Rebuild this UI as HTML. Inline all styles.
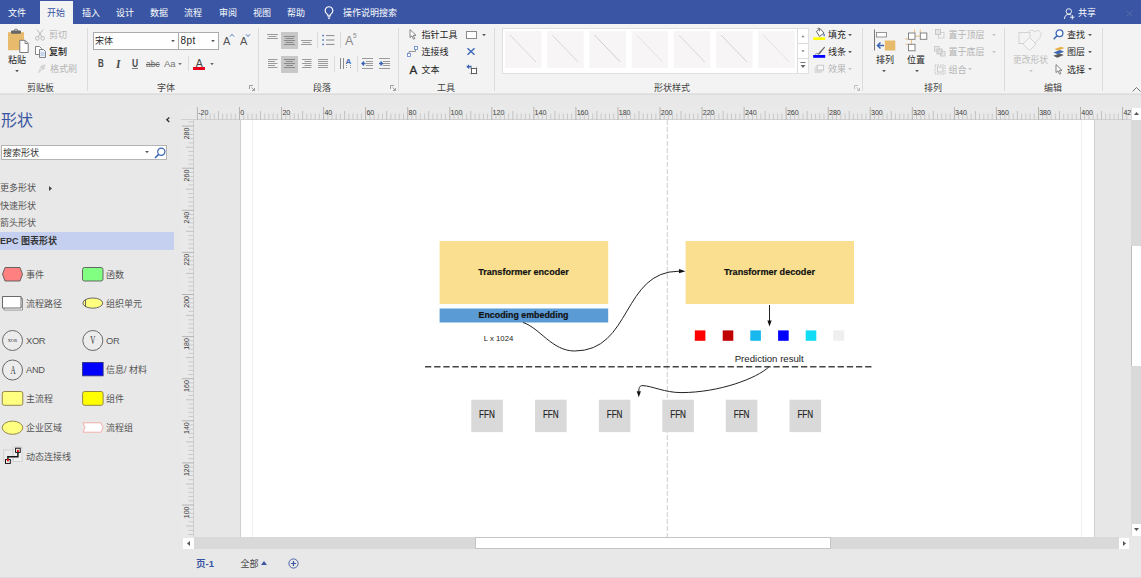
<!DOCTYPE html>
<html lang="zh-CN">
<head>
<meta charset="utf-8">
<title>Visio</title>
<style>
*{box-sizing:border-box;margin:0;padding:0}
html,body{width:1141px;height:578px;overflow:hidden;background:#e6e6e6}
body{position:relative;font-family:"Liberation Sans","Noto Sans CJK SC",sans-serif;font-size:9px;color:#262626;line-height:1}
.a{position:absolute;white-space:nowrap}
.t{position:absolute;white-space:nowrap;line-height:12px;height:12px;font-size:9px}
.g{color:#b4b4b4}
#tabs{left:0;top:0;width:1141px;height:24px;background:#3955a3}
#tabs .t{color:#fff;font-size:9px;top:6.5px}
#ribbon{left:0;top:24px;width:1141px;height:70px;background:#f3f3f3}
.sep{position:absolute;top:28px;width:1px;height:63px;background:#dcdcdc}
.gl{position:absolute;top:81.5px;font-size:9px;line-height:12px;color:#444}
svg{position:absolute;overflow:visible}
</style>
</head>
<body>
<!-- TAB BAR -->
<div id="tabs" class="a">
  <div class="a" style="left:40px;top:1px;width:33px;height:23px;background:#f3f3f3"></div>
  <div class="t" style="left:8px">文件</div>
  <div class="t" style="left:47px;color:#3955a3">开始</div>
  <div class="t" style="left:82px">插入</div>
  <div class="t" style="left:116px">设计</div>
  <div class="t" style="left:150px">数据</div>
  <div class="t" style="left:184px">流程</div>
  <div class="t" style="left:219px">审阅</div>
  <div class="t" style="left:253px">视图</div>
  <div class="t" style="left:287px">帮助</div>
  <div class="t" style="left:343px">操作说明搜索</div>
  <div class="t" style="left:1078px;top:7px">共享</div>
</div>
<!-- RIBBON -->
<div id="ribbon" class="a"></div>
<svg style="left:0;top:92px" width="1141" height="4"><path d="M0 2h1141" stroke="#d4d4d4" stroke-width="1.2"/></svg>
<div class="sep" style="left:87px"></div>
<div class="sep" style="left:258px"></div>
<div class="sep" style="left:398px"></div>
<div class="sep" style="left:494px"></div>
<div class="sep" style="left:862px"></div>
<div class="sep" style="left:1004px"></div>
<div class="sep" style="left:1102px"></div>
<div class="gl" style="left:27px">剪贴板</div>
<div class="gl" style="left:157px">字体</div>
<div class="gl" style="left:313px">段落</div>
<div class="gl" style="left:437px">工具</div>
<div class="gl" style="left:654px">形状样式</div>
<div class="gl" style="left:924px">排列</div>
<div class="gl" style="left:1044px">编辑</div>
<!-- clipboard group -->
<svg style="left:7px;top:29px" width="24" height="26" viewBox="0 0 24 26">
  <rect x="1" y="3.2" width="16" height="18" fill="#e8bb6c"/>
  <rect x="4" y="1.5" width="10" height="3.2" rx="0.8" fill="#666"/>
  <rect x="7.5" y="0.3" width="3" height="2.5" rx="1" fill="none" stroke="#666" stroke-width="1"/>
  <path d="M12.8 11.3h5.2l3.2 3.2v9h-8.4z" fill="#fff" stroke="#7a7a7a" stroke-width="1"/>
  <path d="M18 11.3v3.2h3.2" fill="none" stroke="#7a7a7a" stroke-width="0.9"/>
</svg>
<div class="t" style="left:8px;top:53.5px;font-size:9px">粘贴</div>
<svg style="left:15px;top:70px" width="4" height="3"><path d="M0.2 0h3.6l-1.8 2.2z" fill="#555"/></svg>
<!-- cut -->
<svg style="left:35px;top:29px" width="10" height="12" viewBox="0 0 10 12">
  <path d="M2 0.5L7 8M8 0.5L3 8" stroke="#bdbdbd" stroke-width="1" fill="none"/>
  <circle cx="2.3" cy="9.3" r="1.8" fill="none" stroke="#bdbdbd" stroke-width="1"/>
  <circle cx="7.7" cy="9.3" r="1.8" fill="none" stroke="#bdbdbd" stroke-width="1"/>
</svg>
<div class="t g" style="left:49px;top:29px">剪切</div>
<!-- copy -->
<svg style="left:35px;top:46px" width="11" height="12" viewBox="0 0 11 12">
  <path d="M0.5 0.5h4l2 2v6h-6z" fill="#fff" stroke="#777" stroke-width="0.9"/>
  <path d="M4.5 3.5h4l2 2v6h-6z" fill="#e9f1fb" stroke="#777" stroke-width="0.9"/>
  <path d="M5.5 7h4M5.5 9h4" stroke="#8aa9d6" stroke-width="0.8"/>
</svg>
<div class="t" style="left:49px;top:46px;font-weight:500;color:#222">复制</div>
<!-- format painter -->
<svg style="left:37px;top:64px" width="9" height="10" viewBox="0 0 9 10">
  <path d="M5 1l3 3-2 2-3-3z" fill="#cfcfcf"/>
  <path d="M3 4L0.8 8.6l1 0.6L5 6z" fill="#d8d8d8"/>
  <circle cx="7.3" cy="1.6" r="1.1" fill="#c8c8c8"/>
</svg>
<div class="t g" style="left:50px;top:63px">格式刷</div>
<!-- font group -->
<div class="a" style="left:93px;top:32px;width:86px;height:18px;background:#fff;border:1px solid #ababab"></div>
<div class="a" style="left:178px;top:32px;width:41px;height:18px;background:#fff;border:1px solid #ababab"></div>
<div class="t" style="left:95px;top:35px;font-size:9px">宋体</div>
<div class="t" style="left:180.5px;top:35px;font-size:10px;letter-spacing:0.5px">8pt</div>
<svg style="left:171px;top:40px" width="4" height="3"><path d="M0.2 0h3.6l-1.8 2.2z" fill="#555"/></svg>
<svg style="left:211px;top:40px" width="4" height="3"><path d="M0.2 0h3.6l-1.8 2.2z" fill="#555"/></svg>
<div class="t" style="left:223px;top:35px;font-size:11px;color:#555">A</div>
<svg style="left:230px;top:34px" width="4" height="3"><path d="M0 2.5L2 0.3 4 2.5" stroke="#4a78c0" stroke-width="1" fill="none"/></svg>
<div class="t" style="left:240px;top:35px;font-size:11px;color:#555">A</div>
<svg style="left:246px;top:34px" width="4" height="3"><path d="M0 0.3L2 2.5 4 0.3" stroke="#4a78c0" stroke-width="1" fill="none"/></svg>
<div class="t" style="left:98px;top:58px;font-size:10px;font-weight:bold;color:#4a4a4a;transform:scaleX(.8);transform-origin:0 0">B</div>
<div class="t" style="left:116px;top:58px;font-size:11.5px;font-weight:bold;font-style:italic;font-family:'Liberation Serif',serif;color:#4a4a4a">I</div>
<div class="t" style="left:131.5px;top:58px;font-size:10px;font-weight:bold;color:#4a4a4a;transform:scaleX(.85);transform-origin:0 0">U</div><div class="a" style="left:131.5px;top:67.7px;width:6.5px;height:1px;background:#777"></div>
<div class="t" style="left:146px;top:58px;font-size:8.5px;color:#666;text-decoration:line-through">abc</div>
<div class="t" style="left:164px;top:58px;font-size:9.5px;color:#777">Aa</div>
<svg style="left:178px;top:63px" width="4" height="3"><path d="M0.2 0h3.6l-1.8 2.2z" fill="#777"/></svg>
<div class="a" style="left:188px;top:56px;width:1px;height:15px;background:#dcdcdc"></div>
<div class="t" style="left:195.7px;top:56.5px;font-size:10.5px;color:#444">A</div>
<div class="a" style="left:193.3px;top:67px;width:12.2px;height:2.5px;background:#e8001c"></div>
<svg style="left:210px;top:63px" width="4" height="3"><path d="M0.2 0h3.6l-1.8 2.2z" fill="#666"/></svg>
<svg style="left:249px;top:85px" width="6" height="6" viewBox="0 0 6 6"><path d="M0.5 4V0.5H4M2.5 2.5L5.3 5.3M5.5 3v2.5H3" stroke="#888" stroke-width="0.8" fill="none"/></svg>
<!-- paragraph group -->
<div class="a" style="left:281px;top:32px;width:17px;height:17px;background:#c8c8c8"></div>
<div class="a" style="left:281px;top:55.5px;width:17px;height:17px;background:#c8c8c8"></div>
<svg style="left:267px;top:32px" width="46" height="17" viewBox="0 0 46 17">
  <g stroke="#9a9a9a" stroke-width="1" fill="none">
    <path d="M0 2.5h11M1.5 4.5h8M0 6.5h11"/>
    <path d="M17 4.5h11M18.5 6.5h8M17 8.5h11M18.5 10.5h8M17 12.5h11" stroke="#8a8a8a"/>
    <path d="M34 8.5h11M35.5 10.5h8M34 12.5h11" />
  </g>
</svg>
<div class="a" style="left:317px;top:32px;width:1px;height:16px;background:#dcdcdc"></div>
<svg style="left:322px;top:34px" width="13" height="12" viewBox="0 0 13 12">
  <g fill="#4a78c0"><rect x="0.3" y="0.8" width="1.6" height="1.6"/><rect x="0.3" y="5.2" width="1.6" height="1.6"/><rect x="0.3" y="9.6" width="1.6" height="1.6"/></g>
  <path d="M4 1.6h8.5M4 6h8.5M4 10.4h8.5" stroke="#8a8a8a" stroke-width="1"/>
</svg>
<div class="a" style="left:339.5px;top:32px;width:1px;height:16px;background:#dcdcdc"></div>
<div class="t" style="left:345px;top:35px;font-size:12.5px;color:#8a8a8a">A</div>
<div class="t" style="left:353px;top:30px;font-size:6.5px;color:#8a8a8a">5</div>
<svg style="left:267px;top:55px" width="125" height="17" viewBox="0 0 125 17">
  <g stroke="#9a9a9a" stroke-width="1" fill="none">
    <path d="M1 4.5h9.5M1 6.5h7M1 8.5h9.5M1 10.5h7M1 12.5h9.5" />
    <path d="M17 4.5h11M19 6.5h7M17 8.5h11M19 10.5h7M17 12.5h11" stroke="#8a8a8a"/>
    <path d="M35 4.5h9.5M37.5 6.5h7M35 8.5h9.5M37.5 10.5h7M35 12.5h9.5"/>
    <path d="M51 4.5h10M51 6.5h10M51 8.5h10M51 10.5h10M51 12.5h10"/>
    <path d="M73.5 3v11M76.5 3v11" stroke="#8a8a8a"/>
    <path d="M79.5 10v4M83.5 10v4" stroke-dasharray="1 1"/>
    <path d="M95 3.5h11M99 6.5h7M99 8.5h7M99 10.5h7M95 13.5h11"/>
    <path d="M112 3.5h11M116 6.5h7M116 8.5h7M116 10.5h7M112 13.5h11"/>
  </g>
  <path d="M98.5 8.5h-3.5M97 6.5l-2 2 2 2" stroke="#3b66b5" stroke-width="1.3" fill="none"/>
  <path d="M112 8.5h3.5M113.5 6.5l2 2-2 2" stroke="#3b66b5" stroke-width="1.3" fill="none"/>
</svg>
<div class="t" style="left:345.5px;top:56px;font-size:8px;font-weight:bold;color:#3b66b5">A</div>
<div class="a" style="left:333.5px;top:56px;width:1px;height:16px;background:#dcdcdc"></div>
<div class="a" style="left:356.5px;top:56px;width:1px;height:16px;background:#dcdcdc"></div>
<svg style="left:390px;top:85px" width="6" height="6" viewBox="0 0 6 6"><path d="M0.5 4V0.5H4M2.5 2.5L5.3 5.3M5.5 3v2.5H3" stroke="#888" stroke-width="0.8" fill="none"/></svg>
<!-- tools group -->
<svg style="left:409px;top:29px" width="9" height="11" viewBox="0 0 9 11">
  <path d="M1 0.6v8l2-1.8 1.5 3.4 1.3-0.6-1.5-3.3h2.7z" fill="#fff" stroke="#666" stroke-width="0.8"/>
</svg>
<div class="t" style="left:421.5px;top:28.5px">指针工具</div>
<div class="a" style="left:465.5px;top:30.5px;width:11.5px;height:8px;background:#fff;border:1px solid #8a8a8a"></div>
<svg style="left:482px;top:34px" width="4" height="3"><path d="M0.2 0h3.6l-1.8 2.2z" fill="#555"/></svg>
<svg style="left:407px;top:46px" width="12" height="11" viewBox="0 0 12 11">
  <path d="M2 8.5V5.5h6.5V2.5" fill="none" stroke="#8a8a8a" stroke-width="0.9" stroke-linejoin="round"/>
  <rect x="0.5" y="7.5" width="3" height="3" fill="#fff" stroke="#5b86c8" stroke-width="0.8"/>
  <rect x="7.5" y="0.5" width="3" height="3" fill="#fff" stroke="#5b86c8" stroke-width="0.8"/>
</svg>
<div class="t" style="left:421.5px;top:46px">连接线</div>
<svg style="left:467px;top:48px" width="8" height="7" viewBox="0 0 8 7"><path d="M0.5 0.3L7.5 6.7M7.5 0.3L0.5 6.7" stroke="#3b66b5" stroke-width="1.4"/></svg>
<div class="t" style="left:409.5px;top:63.5px;font-size:11.5px;color:#2a2a2a;-webkit-text-stroke:0.3px #2a2a2a">A</div>
<div class="t" style="left:421.5px;top:63.5px">文本</div>
<svg style="left:465.5px;top:64px" width="12" height="11" viewBox="0 0 12 11">
  <rect x="5.5" y="4.5" width="5" height="5" fill="#fff" stroke="#555" stroke-width="0.9"/>
  <path d="M5.5 2.5v8M10.5 2.5v8M3.5 4.5h8M3.5 9.5h8" stroke="#555" stroke-width="0.7" fill="none" opacity="0.5"/>
  <path d="M0.3 2.7l2.7-2.4v1.5h2.5v1.8H3v1.5z" fill="#3b66b5"/>
</svg>
<!-- shape styles gallery -->
<div class="a" style="left:502px;top:28px;width:307px;height:45.5px;background:#fff;border:1px solid #e0e0e0"></div>
<div class="a" style="left:796.5px;top:28px;width:1px;height:45px;background:#dcdcdc"></div>
<div class="a" style="left:797px;top:43px;width:11.5px;height:1px;background:#dcdcdc"></div>
<div class="a" style="left:797px;top:58px;width:11.5px;height:1px;background:#dcdcdc"></div>
<svg style="left:801px;top:35px" width="4" height="3"><path d="M0.5 2.2h3L2 0.2z" fill="#777"/></svg>
<svg style="left:801px;top:50px" width="4" height="3"><path d="M0.5 0.2h3L2 2.2z" fill="#777"/></svg>
<svg style="left:800px;top:62px" width="6" height="7" viewBox="0 0 6 7"><path d="M0.5 0.5h5" stroke="#666" stroke-width="0.9"/><path d="M0.5 3h5l-2.5 3z" fill="#666"/></svg>
<svg style="left:505px;top:31px" width="292" height="38" viewBox="0 0 292 38">
  <g fill="#f7f5f5">
    <rect x="0" y="0" width="36.5" height="37"/><rect x="42.2" y="0" width="36.5" height="37"/><rect x="84.4" y="0" width="36.5" height="37"/>
    <rect x="126.6" y="0" width="36.5" height="37"/><rect x="168.8" y="0" width="36.5" height="37"/><rect x="211" y="0" width="36.5" height="37"/><rect x="253.2" y="0" width="36.5" height="37"/>
  </g>
  <g stroke-width="0.9" fill="none">
    <path d="M5 4l26 27" stroke="#d6d2d2"/>
    <path d="M47.2 4l26 27" stroke="#d8d4d4"/>
    <path d="M89.4 4l26 27" stroke="#cfcaca"/>
    <path d="M131.6 4l26 27" stroke="#e2dede"/>
    <path d="M173.8 4l26 27" stroke="#d8d4d4"/>
    <path d="M216 4l26 27" stroke="#d2cdcd"/>
    <path d="M258.2 4l26 27" stroke="#e4e0e0"/>
  </g>
</svg>
<!-- fill / line / effects -->
<svg style="left:813px;top:28px" width="13" height="12" viewBox="0 0 13 12">
  <path d="M3.5 3.5l3.5-3 4 4.5-4.5 3.5z" fill="#fff" stroke="#555" stroke-width="0.9" stroke-linejoin="round"/>
  <path d="M4.5 0.8c0-1 2-1 2 0.5v2" fill="none" stroke="#555" stroke-width="0.8"/>
  <path d="M10.8 5c1 1.5 1.5 2.5 0.7 3.2-0.8 0.5-1.5-0.5-0.7-3.2z" fill="#3b66b5"/>
  <rect x="0.2" y="9.3" width="12" height="2.7" fill="#ffff00"/>
</svg>
<div class="t" style="left:828px;top:29px">填充</div>
<svg style="left:848px;top:34px" width="4" height="3"><path d="M0.2 0h3.6l-1.8 2.2z" fill="#555"/></svg>
<svg style="left:813px;top:46px" width="13" height="12" viewBox="0 0 13 12">
  <path d="M11.5 0.5L6 6.5l-1.5 2.5 2.5-1.3L12 1.5z" fill="#666"/>
  <path d="M2 8.5c1.5-1.5 3-1 4.5-0.5" stroke="#777" stroke-width="0.8" fill="none"/>
  <rect x="0.2" y="9" width="12" height="2.8" fill="#0000ff"/>
</svg>
<div class="t" style="left:828px;top:46px">线条</div>
<svg style="left:848px;top:51px" width="4" height="3"><path d="M0.2 0h3.6l-1.8 2.2z" fill="#555"/></svg>
<svg style="left:814px;top:64px" width="11" height="10" viewBox="0 0 11 10">
  <path d="M3 1h7v5l-2.5 3h-7V4z" fill="#dcdcdc"/>
  <rect x="3.2" y="1.2" width="6.5" height="4.8" fill="#f6f6f6" stroke="#c4c4c4" stroke-width="0.8"/>
</svg>
<div class="t g" style="left:828px;top:63px">效果</div>
<svg style="left:848px;top:68px" width="4" height="3"><path d="M0.2 0h3.6l-1.8 2.2z" fill="#c0c0c0"/></svg>
<svg style="left:854px;top:85px" width="6" height="6" viewBox="0 0 6 6"><path d="M0.5 4V0.5H4M2.5 2.5L5.3 5.3M5.5 3v2.5H3" stroke="#b0b0b0" stroke-width="0.8" fill="none"/></svg>
<!-- arrange group -->
<svg style="left:873px;top:29px" width="24" height="23" viewBox="0 0 24 23">
  <path d="M1.5 0.5v21" stroke="#777" stroke-width="1"/>
  <rect x="3.5" y="3.5" width="10" height="4.5" fill="#fff" stroke="#8a8a8a" stroke-width="0.9"/>
  <rect x="11.8" y="11.5" width="10.5" height="10" fill="#e8bb6c"/>
  <path d="M11 16.5H4.5M7.5 13.5l-3 3 3 3" stroke="#3b66b5" stroke-width="1.5" fill="none"/>
</svg>
<div class="t" style="left:876px;top:53.5px;font-size:9px">排列</div>
<svg style="left:882px;top:70px" width="4" height="3"><path d="M0.2 0h3.6l-1.8 2.2z" fill="#555"/></svg>
<svg style="left:904px;top:29px" width="24" height="23" viewBox="0 0 24 23">
  <path d="M10.5 0.5v3.5M16.3 0.5v3.5M11 7.2h5.3M1 10h3.5M7.5 10.3v5M1.5 15.3h3" stroke="#e6ae6a" stroke-width="0.8" fill="none"/>
  <rect x="4.5" y="4" width="6.5" height="6.3" fill="#fff" stroke="#7a7a7a" stroke-width="0.9"/>
  <rect x="16.3" y="4" width="6.5" height="6.3" fill="#fff" stroke="#7a7a7a" stroke-width="0.9"/>
  <rect x="4.5" y="15.3" width="6.5" height="6.5" fill="#fff" stroke="#7a7a7a" stroke-width="0.9"/>
</svg>
<div class="t" style="left:907px;top:53.5px;font-size:9px">位置</div>
<svg style="left:915px;top:70px" width="4" height="3"><path d="M0.2 0h3.6l-1.8 2.2z" fill="#555"/></svg>
<svg style="left:935px;top:29px" width="10" height="10" viewBox="0 0 10 10">
  <rect x="3.5" y="3.5" width="5.5" height="5.5" fill="none" stroke="#d0d0d0" stroke-width="0.9"/>
  <rect x="0.5" y="0.5" width="5" height="5" fill="#e6e6e6" stroke="#c4c4c4" stroke-width="0.9"/>
</svg>
<div class="t g" style="left:948.5px;top:28.5px">置于顶层</div>
<svg style="left:992px;top:34px" width="4" height="3"><path d="M0.2 0h3.6l-1.8 2.2z" fill="#c4c4c4"/></svg>
<svg style="left:934px;top:46px" width="12" height="11" viewBox="0 0 12 11">
  <rect x="0.5" y="0.5" width="4.5" height="4.5" fill="#ececec" stroke="#c8c8c8" stroke-width="0.9"/>
  <rect x="6.5" y="5.5" width="4.5" height="4.5" fill="#ececec" stroke="#c8c8c8" stroke-width="0.9"/>
  <rect x="3" y="3" width="5" height="5" fill="#dcdcdc" stroke="#c4c4c4" stroke-width="0.9"/>
</svg>
<div class="t g" style="left:948.5px;top:46px">置于底层</div>
<svg style="left:992px;top:51px" width="4" height="3"><path d="M0.2 0h3.6l-1.8 2.2z" fill="#c4c4c4"/></svg>
<svg style="left:934px;top:64px" width="12" height="11" viewBox="0 0 12 11">
  <rect x="1" y="1" width="10" height="9" fill="none" stroke="#bdbdbd" stroke-width="0.9" stroke-dasharray="1.5 1"/>
  <rect x="3.5" y="3" width="5.5" height="5" fill="none" stroke="#c4c4c4" stroke-width="0.9"/>
</svg>
<div class="t g" style="left:948.5px;top:63.5px">组合</div>
<svg style="left:968px;top:68px" width="4" height="3"><path d="M0.2 0h3.6l-1.8 2.2z" fill="#c4c4c4"/></svg>
<!-- edit group -->
<svg style="left:1018px;top:29px" width="24" height="23" viewBox="0 0 24 23">
  <path d="M9 5c1-4 6-5 8-2 2-3 7-1 6 3-0.5 3-4 6-6 8" fill="none" stroke="#d2d2d2" stroke-width="0.9"/>
  <rect x="1" y="3.5" width="11" height="11" fill="#f3f3f3" stroke="#d0d0d0" stroke-width="0.9"/>
  <path d="M11.5 8.5l6.5 6.5-6.5 6.5-6.5-6.5z" fill="#f6f6f6" stroke="#d0d0d0" stroke-width="0.9"/>
</svg>
<div class="t" style="left:1013px;top:53.5px;font-size:8.75px;color:#bdbdbd">更改形状</div>
<svg style="left:1029px;top:70px" width="4" height="3"><path d="M0.2 0h3.6l-1.8 2.2z" fill="#c8c8c8"/></svg>
<svg style="left:1053px;top:29px" width="11" height="11" viewBox="0 0 11 11">
  <circle cx="6.5" cy="4.3" r="3.4" fill="#fff" stroke="#3b66b5" stroke-width="1.3"/>
  <path d="M4 6.8L0.7 10.3" stroke="#3b66b5" stroke-width="1.5"/>
</svg>
<div class="t" style="left:1067px;top:28.5px">查找</div>
<svg style="left:1087.5px;top:34px" width="4" height="3"><path d="M0.2 0h3.6l-1.8 2.2z" fill="#555"/></svg>
<svg style="left:1053px;top:45.5px" width="12" height="12" viewBox="0 0 12 12">
  <path d="M1.5 3l6.5-2.3 3.5 1.4-6.5 2.6z" fill="#e8b04c"/>
  <path d="M0.5 6.4l6.5-2.3 4.2 1.6-6.7 2.6z" fill="#3b66b5"/>
  <path d="M0.3 9.8l6.5-2.3 4 1.6-6.5 2.6z" fill="#5a5a5a"/>
</svg>
<div class="t" style="left:1067px;top:46px">图层</div>
<svg style="left:1087.5px;top:51px" width="4" height="3"><path d="M0.2 0h3.6l-1.8 2.2z" fill="#555"/></svg>
<svg style="left:1055px;top:63.5px" width="9" height="11" viewBox="0 0 9 11">
  <path d="M1 0.6v8l2-1.8 1.5 3.4 1.3-0.6-1.5-3.3h2.7z" fill="#fff" stroke="#666" stroke-width="0.8"/>
</svg>
<div class="t" style="left:1067px;top:63.5px">选择</div>
<svg style="left:1087.5px;top:68px" width="4" height="3"><path d="M0.2 0h3.6l-1.8 2.2z" fill="#555"/></svg>
<svg style="left:1132px;top:87px" width="9" height="5" viewBox="0 0 9 5"><path d="M0.5 4.5l4-4 4 4" stroke="#666" stroke-width="0.9" fill="none"/></svg>
<!-- tab icons -->
<svg style="left:324px;top:6px" width="10" height="14" viewBox="0 0 10 14">
  <path d="M5 0.7a3.8 3.8 0 0 0-2.2 6.9c0.5 0.5 0.7 1 0.7 1.7h3c0-0.7 0.2-1.2 0.7-1.7A3.8 3.8 0 0 0 5 0.7z" fill="none" stroke="#fff" stroke-width="1.1"/>
  <path d="M3.6 10.8h2.8M4 12.3h2" stroke="#fff" stroke-width="1.1"/>
</svg>
<svg style="left:1064px;top:7.5px" width="11" height="12" viewBox="0 0 11 12">
  <circle cx="4.8" cy="3.4" r="2.7" fill="none" stroke="#fff" stroke-width="0.9"/>
  <path d="M0.5 11c0-3 1.5-4.6 4.3-4.6 1 0 1.8 0.2 2.4 0.6" fill="none" stroke="#fff" stroke-width="0.9"/>
  <path d="M8.3 7v4.4M6.1 9.2h4.4" stroke="#fff" stroke-width="0.9"/>
</svg>
<svg style="left:1126px;top:9.5px" width="7" height="7" viewBox="0 0 7 7"><path d="M0.5 0.5l6 6M6.5 0.5l-6 6" stroke="#5b6fa6" stroke-width="0.9"/></svg>
<!--RIBBON-CONTENT-->
<div class="a" style="left:0;top:95px;width:174px;height:483px;background:#e8e8e8"></div>
<div class="a" style="left:1px;top:110px;font-size:16px;line-height:22px;color:#3955a3">形状</div>
<svg style="left:166px;top:117px" width="4" height="6" viewBox="0 0 4 6"><path d="M3.3 0.5L0.8 2.8l2.5 2.3" stroke="#333" stroke-width="1.3" fill="none"/></svg>
<div class="a" style="left:1px;top:145px;width:166px;height:15px;background:#fff;border:1px solid #b4b4b4"></div>
<div class="t" style="left:3px;top:146.5px;color:#333">搜索形状</div>
<svg style="left:144.5px;top:150.5px" width="4" height="3"><path d="M0.2 0h3.6l-1.8 2.2z" fill="#555"/></svg>
<svg style="left:154px;top:146.5px" width="12" height="12" viewBox="0 0 12 12">
  <circle cx="7.3" cy="4.7" r="3.6" fill="#fff" stroke="#3b66b5" stroke-width="1.2"/>
  <path d="M4.6 7.4L1 11" stroke="#3b66b5" stroke-width="1.5"/>
</svg>
<div class="t" style="left:0;top:182px;color:#555">更多形状</div>
<svg style="left:49px;top:185.5px" width="3" height="5"><path d="M0 0v5l3-2.5z" fill="#444"/></svg>
<div class="t" style="left:0;top:199.5px;color:#555">快速形状</div>
<div class="t" style="left:0;top:217px;color:#555">箭头形状</div>
<div class="a" style="left:0;top:232px;width:174px;height:17.5px;background:#c5d0f0"></div>
<div class="t" style="left:0;top:235px;font-weight:bold;color:#333">EPC 图表形状</div>
<!-- stencil shapes -->
<svg style="left:0;top:260px" width="174" height="215" viewBox="0 260 174 215">
  <g stroke="#5a5a5a" stroke-width="0.9">
    <path d="M5 267.5h15l2.5 6.7-2.5 6.8h-15l-2.5-6.8z" fill="#ff8080"/>
    <rect x="82.5" y="267.5" width="20.5" height="13.5" rx="2" fill="#80ff80"/>
    <path d="M4 298.5h18.5v11.5h-18.5z" fill="#fff" stroke="#888"/>
    <path d="M2.5 296.5h18.5v11.5h-18.5z" fill="#fff"/>
    <path d="M21 296.5c2 3.5 2 8 0 11.5" fill="none" stroke="#888"/>
    <ellipse cx="92.8" cy="303.1" rx="9.9" ry="5.1" fill="#ffff80"/>
    <path d="M85.5 299.3v7.6" fill="none"/>
    <circle cx="12.5" cy="340.5" r="10" fill="#ececec"/>
    <circle cx="92.8" cy="340.5" r="10" fill="#ececec"/>
    <circle cx="12.5" cy="370" r="10" fill="#ececec"/>
    <rect x="82.6" y="362.5" width="20.5" height="13.3" fill="#0000ff" stroke="#303080"/>
    <rect x="2.3" y="391.5" width="20.5" height="13.8" rx="2" fill="#ffff80" stroke="#8a7a40"/>
    <rect x="82.6" y="391.5" width="20.5" height="13.8" rx="2" fill="#ffff00" stroke="#8a7a40"/>
    <ellipse cx="12.5" cy="427.7" rx="10.3" ry="6.6" fill="#ffff80" stroke="#8a7a40"/>
    <path d="M83 422.8h18l2 4.7-2 4.7h-18l2-4.7z" fill="#fff" stroke="#f0a8a0"/>
  </g>
  <!-- dynamic connector -->
  <rect x="13" y="447" width="9" height="14.5" fill="#efefef" stroke="#cdcdcd" stroke-width="0.8"/>
  <rect x="3.7" y="450" width="9.3" height="11" fill="#ebebeb" stroke="#cdcdcd" stroke-width="0.8"/>
  <path d="M17.9 452v4.8h-10v3.5" fill="none" stroke="#1a1a1a" stroke-width="1.5"/>
  <rect x="15.6" y="448.2" width="4.6" height="4.2" fill="#fff" stroke="#111" stroke-width="1"/>
  <rect x="17" y="449.8" width="1.8" height="2.2" fill="#f00000"/>
  <rect x="5.5" y="459.6" width="4.8" height="3.8" fill="#fff" stroke="#111" stroke-width="1"/>
  <rect x="7" y="459" width="1.8" height="2.4" fill="#f00000"/>
  <g font-family="Liberation Serif,serif" fill="#333" text-anchor="middle">
    <text x="12.5" y="342" font-size="4.5">XOR</text>
    <text transform="translate(92.8 344.2) scale(0.62 1)" font-size="11.5">V</text>
    <text transform="translate(13 373.6) scale(0.62 1)" font-size="11.5">A</text>
  </g>
</svg>
<div class="t" style="left:26px;top:268.5px;color:#555">事件</div>
<div class="t" style="left:106px;top:268.5px;color:#555">函数</div>
<div class="t" style="left:26px;top:297.5px;color:#555">流程路径</div>
<div class="t" style="left:106px;top:297.5px;color:#555">组织单元</div>
<div class="t" style="left:26px;top:335px;color:#555;font-size:9.3px;letter-spacing:-0.3px">XOR</div>
<div class="t" style="left:106px;top:335px;color:#555;font-size:9.3px;letter-spacing:-0.3px">OR</div>
<div class="t" style="left:26px;top:364px;color:#555;font-size:9.3px;letter-spacing:-0.3px">AND</div>
<div class="t" style="left:106px;top:364px;color:#555">信息/ 材料</div>
<div class="t" style="left:26px;top:393px;color:#555">主流程</div>
<div class="t" style="left:106px;top:393px;color:#555">组件</div>
<div class="t" style="left:26px;top:422px;color:#555">企业区域</div>
<div class="t" style="left:106px;top:422px;color:#555">流程组</div>
<div class="t" style="left:26px;top:450.5px;color:#555">动态连接线</div>
<!--PANEL-->
<!--RULERS-START-->
<div class="a" style="left:174px;top:95px;width:967px;height:483px;background:#e8e8e8"></div>
<div class="a" style="left:181px;top:106px;width:950px;height:430.5px;background:#e7e7e7"></div>
<div class="a" style="left:239.5px;top:120px;width:855px;height:416.5px;background:#fff;border-left:1px solid #cfcfcf;border-right:1.5px solid #d0d0d0"></div>
<div class="a" style="left:252px;top:120px;width:1px;height:416.5px;background:#efefef"></div>
<div class="a" style="left:1081px;top:120px;width:1px;height:416.5px;background:#efefef"></div>
<div class="a" style="left:181px;top:106px;width:950px;height:14px;background:#e9e9e9;border-bottom:1px solid #d0d0d0"></div>
<div class="a" style="left:181px;top:120px;width:13px;height:416.5px;background:#e9e9e9;border-right:1px solid #d0d0d0"></div>
<svg style="left:0;top:106px" width="1131" height="14" viewBox="0 0 1131 14">
<path d="M201.7 7.5v6.5M205.9 7.5v6.5M210.1 7.5v6.5M214.3 7.5v6.5M222.7 7.5v6.5M226.9 7.5v6.5M231.1 7.5v6.5M235.3 7.5v6.5M243.7 7.5v6.5M247.9 7.5v6.5M252.1 7.5v6.5M256.3 7.5v6.5M264.7 7.5v6.5M268.9 7.5v6.5M273.1 7.5v6.5M277.3 7.5v6.5M285.8 7.5v6.5M290 7.5v6.5M294.2 7.5v6.5M298.4 7.5v6.5M306.8 7.5v6.5M311 7.5v6.5M315.2 7.5v6.5M319.4 7.5v6.5M327.8 7.5v6.5M332 7.5v6.5M336.2 7.5v6.5M340.4 7.5v6.5M348.8 7.5v6.5M353 7.5v6.5M357.2 7.5v6.5M361.4 7.5v6.5M369.9 7.5v6.5M374.1 7.5v6.5M378.3 7.5v6.5M382.5 7.5v6.5M390.9 7.5v6.5M395.1 7.5v6.5M399.3 7.5v6.5M403.5 7.5v6.5M411.9 7.5v6.5M416.1 7.5v6.5M420.3 7.5v6.5M424.5 7.5v6.5M432.9 7.5v6.5M437.1 7.5v6.5M441.3 7.5v6.5M445.5 7.5v6.5M454 7.5v6.5M458.2 7.5v6.5M462.4 7.5v6.5M466.6 7.5v6.5M475 7.5v6.5M479.2 7.5v6.5M483.4 7.5v6.5M487.6 7.5v6.5M496 7.5v6.5M500.2 7.5v6.5M504.4 7.5v6.5M508.6 7.5v6.5M517 7.5v6.5M521.2 7.5v6.5M525.4 7.5v6.5M529.6 7.5v6.5M538.1 7.5v6.5M542.3 7.5v6.5M546.5 7.5v6.5M550.7 7.5v6.5M559.1 7.5v6.5M563.3 7.5v6.5M567.5 7.5v6.5M571.7 7.5v6.5M580.1 7.5v6.5M584.3 7.5v6.5M588.5 7.5v6.5M592.7 7.5v6.5M601.1 7.5v6.5M605.3 7.5v6.5M609.5 7.5v6.5M613.7 7.5v6.5M622.2 7.5v6.5M626.4 7.5v6.5M630.6 7.5v6.5M634.8 7.5v6.5M643.2 7.5v6.5M647.4 7.5v6.5M651.6 7.5v6.5M655.8 7.5v6.5M664.2 7.5v6.5M668.4 7.5v6.5M672.6 7.5v6.5M676.8 7.5v6.5M685.2 7.5v6.5M689.4 7.5v6.5M693.6 7.5v6.5M697.8 7.5v6.5M706.3 7.5v6.5M710.5 7.5v6.5M714.7 7.5v6.5M718.9 7.5v6.5M727.3 7.5v6.5M731.5 7.5v6.5M735.7 7.5v6.5M739.9 7.5v6.5M748.3 7.5v6.5M752.5 7.5v6.5M756.7 7.5v6.5M760.9 7.5v6.5M769.3 7.5v6.5M773.5 7.5v6.5M777.7 7.5v6.5M781.9 7.5v6.5M790.4 7.5v6.5M794.6 7.5v6.5M798.8 7.5v6.5M803 7.5v6.5M811.4 7.5v6.5M815.6 7.5v6.5M819.8 7.5v6.5M824 7.5v6.5M832.4 7.5v6.5M836.6 7.5v6.5M840.8 7.5v6.5M845 7.5v6.5M853.4 7.5v6.5M857.6 7.5v6.5M861.8 7.5v6.5M866 7.5v6.5M874.5 7.5v6.5M878.7 7.5v6.5M882.9 7.5v6.5M887.1 7.5v6.5M895.5 7.5v6.5M899.7 7.5v6.5M903.9 7.5v6.5M908.1 7.5v6.5M916.5 7.5v6.5M920.7 7.5v6.5M924.9 7.5v6.5M929.1 7.5v6.5M937.5 7.5v6.5M941.7 7.5v6.5M945.9 7.5v6.5M950.1 7.5v6.5M958.6 7.5v6.5M962.8 7.5v6.5M967 7.5v6.5M971.2 7.5v6.5M979.6 7.5v6.5M983.8 7.5v6.5M988 7.5v6.5M992.2 7.5v6.5M1000.6 7.5v6.5M1004.8 7.5v6.5M1009 7.5v6.5M1013.2 7.5v6.5M1021.6 7.5v6.5M1025.8 7.5v6.5M1030 7.5v6.5M1034.2 7.5v6.5M1042.7 7.5v6.5M1046.9 7.5v6.5M1051.1 7.5v6.5M1055.3 7.5v6.5M1063.7 7.5v6.5M1067.9 7.5v6.5M1072.1 7.5v6.5M1076.3 7.5v6.5M1084.7 7.5v6.5M1088.9 7.5v6.5M1093.1 7.5v6.5M1097.3 7.5v6.5M1105.7 7.5v6.5M1109.9 7.5v6.5M1114.1 7.5v6.5M1118.3 7.5v6.5M1126.8 7.5v6.5" stroke="#c9c9c9" stroke-width="1" fill="none"/>
<path d="M218.5 5v9M260.5 5v9M302.6 5v9M344.6 5v9M386.7 5v9M428.7 5v9M470.8 5v9M512.8 5v9M554.9 5v9M596.9 5v9M639 5v9M681 5v9M723.1 5v9M765.1 5v9M807.2 5v9M849.2 5v9M891.3 5v9M933.3 5v9M975.4 5v9M1017.4 5v9M1059.5 5v9M1101.5 5v9" stroke="#c2c2c2" stroke-width="1" fill="none"/>
<path d="M197.4 1v13M239.5 1v13M281.6 1v13M323.6 1v13M365.6 1v13M407.7 1v13M449.8 1v13M491.8 1v13M533.9 1v13M575.9 1v13M618 1v13M660 1v13M702 1v13M744.1 1v13M786.1 1v13M828.2 1v13M870.2 1v13M912.3 1v13M954.4 1v13M996.4 1v13M1038.5 1v13M1080.5 1v13M1122.6 1v13" stroke="#b4b4b4" stroke-width="1" fill="none"/>
<g font-family="Liberation Sans,sans-serif" font-size="8" fill="#3c3c3c">
<text transform="translate(198.2 9.3) scale(0.88 1)">-20</text>
<text transform="translate(240.3 9.3) scale(0.88 1)">0</text>
<text transform="translate(282.4 9.3) scale(0.88 1)">20</text>
<text transform="translate(324.4 9.3) scale(0.88 1)">40</text>
<text transform="translate(366.4 9.3) scale(0.88 1)">60</text>
<text transform="translate(408.5 9.3) scale(0.88 1)">80</text>
<text transform="translate(450.6 9.3) scale(0.88 1)">100</text>
<text transform="translate(492.6 9.3) scale(0.88 1)">120</text>
<text transform="translate(534.6 9.3) scale(0.88 1)">140</text>
<text transform="translate(576.7 9.3) scale(0.88 1)">160</text>
<text transform="translate(618.8 9.3) scale(0.88 1)">180</text>
<text transform="translate(660.8 9.3) scale(0.88 1)">200</text>
<text transform="translate(702.8 9.3) scale(0.88 1)">220</text>
<text transform="translate(744.9 9.3) scale(0.88 1)">240</text>
<text transform="translate(786.9 9.3) scale(0.88 1)">260</text>
<text transform="translate(829 9.3) scale(0.88 1)">280</text>
<text transform="translate(871 9.3) scale(0.88 1)">300</text>
<text transform="translate(913.1 9.3) scale(0.88 1)">320</text>
<text transform="translate(955.1 9.3) scale(0.88 1)">340</text>
<text transform="translate(997.2 9.3) scale(0.88 1)">360</text>
<text transform="translate(1039.2 9.3) scale(0.88 1)">380</text>
<text transform="translate(1081.3 9.3) scale(0.88 1)">400</text>
<text transform="translate(1123.4 9.3) scale(0.88 1)">420</text>
</g></svg>
<svg style="left:181px;top:120px" width="13" height="417" viewBox="0 0 13 417">
<path d="M7.5 1.9h5.5M7.5 10.3h5.5M7.5 14.5h5.5M7.5 18.7h5.5M7.5 22.9h5.5M7.5 31.4h5.5M7.5 35.6h5.5M7.5 39.8h5.5M7.5 44h5.5M7.5 52.4h5.5M7.5 56.6h5.5M7.5 60.8h5.5M7.5 65h5.5M7.5 73.5h5.5M7.5 77.7h5.5M7.5 81.9h5.5M7.5 86.1h5.5M7.5 94.5h5.5M7.5 98.7h5.5M7.5 102.9h5.5M7.5 107.1h5.5M7.5 115.6h5.5M7.5 119.8h5.5M7.5 124h5.5M7.5 128.2h5.5M7.5 136.6h5.5M7.5 140.8h5.5M7.5 145h5.5M7.5 149.2h5.5M7.5 157.7h5.5M7.5 161.9h5.5M7.5 166.1h5.5M7.5 170.3h5.5M7.5 178.7h5.5M7.5 182.9h5.5M7.5 187.1h5.5M7.5 191.3h5.5M7.5 199.8h5.5M7.5 204h5.5M7.5 208.2h5.5M7.5 212.4h5.5M7.5 220.8h5.5M7.5 225h5.5M7.5 229.2h5.5M7.5 233.4h5.5M7.5 241.9h5.5M7.5 246.1h5.5M7.5 250.3h5.5M7.5 254.5h5.5M7.5 262.9h5.5M7.5 267.1h5.5M7.5 271.3h5.5M7.5 275.5h5.5M7.5 284h5.5M7.5 288.2h5.5M7.5 292.4h5.5M7.5 296.6h5.5M7.5 305h5.5M7.5 309.2h5.5M7.5 313.4h5.5M7.5 317.6h5.5M7.5 326.1h5.5M7.5 330.3h5.5M7.5 334.5h5.5M7.5 338.7h5.5M7.5 347.1h5.5M7.5 351.3h5.5M7.5 355.5h5.5M7.5 359.7h5.5M7.5 368.2h5.5M7.5 372.4h5.5M7.5 376.6h5.5M7.5 380.8h5.5M7.5 389.2h5.5M7.5 393.4h5.5M7.5 397.6h5.5M7.5 401.8h5.5M7.5 410.3h5.5M7.5 414.5h5.5" stroke="#c9c9c9" stroke-width="1" fill="none"/>
<path d="M5 27.2h8M5 69.2h8M5 111.3h8M5 153.4h8M5 195.5h8M5 237.6h8M5 279.8h8M5 321.9h8M5 364h8M5 406h8" stroke="#c2c2c2" stroke-width="1" fill="none"/>
<path d="M1 6.1h12M1 48.2h12M1 90.3h12M1 132.4h12M1 174.5h12M1 216.6h12M1 258.7h12M1 300.8h12M1 342.9h12M1 385h12" stroke="#b4b4b4" stroke-width="1" fill="none"/>
<g font-family="Liberation Sans,sans-serif" font-size="8" fill="#3c3c3c">
<text transform="translate(8.3 7.6) rotate(-90) scale(0.88 1)" text-anchor="end">280</text>
<text transform="translate(8.3 49.7) rotate(-90) scale(0.88 1)" text-anchor="end">260</text>
<text transform="translate(8.3 91.8) rotate(-90) scale(0.88 1)" text-anchor="end">240</text>
<text transform="translate(8.3 133.9) rotate(-90) scale(0.88 1)" text-anchor="end">220</text>
<text transform="translate(8.3 176) rotate(-90) scale(0.88 1)" text-anchor="end">200</text>
<text transform="translate(8.3 218.1) rotate(-90) scale(0.88 1)" text-anchor="end">180</text>
<text transform="translate(8.3 260.2) rotate(-90) scale(0.88 1)" text-anchor="end">160</text>
<text transform="translate(8.3 302.3) rotate(-90) scale(0.88 1)" text-anchor="end">140</text>
<text transform="translate(8.3 344.4) rotate(-90) scale(0.88 1)" text-anchor="end">120</text>
<text transform="translate(8.3 386.5) rotate(-90) scale(0.88 1)" text-anchor="end">100</text>
</g></svg>
<!--RULERS-END-->
<svg style="left:0;top:120px" width="1131" height="417" viewBox="0 120 1131 417">
  <path d="M667.3 120v417" stroke="#cecece" stroke-width="1" stroke-dasharray="5 2" fill="none"/>
  <rect x="439.6" y="241" width="168.6" height="63" fill="#fadf90"/>
  <rect x="685.6" y="241" width="168.4" height="63" fill="#fadf90"/>
  <rect x="439.6" y="308.5" width="168.6" height="14" fill="#5b9bd5"/>
  <g font-family="Liberation Sans,sans-serif" font-weight="bold" font-size="9.6" fill="#111" stroke="#111" stroke-width="0.2" text-anchor="middle">
    <text x="523.5" y="275" textLength="90.5" lengthAdjust="spacingAndGlyphs">Transformer encoder</text>
    <text x="769.5" y="275" textLength="91" lengthAdjust="spacingAndGlyphs">Transformer decoder</text>
    <text x="523.5" y="318.3" textLength="90" lengthAdjust="spacingAndGlyphs">Encoding embedding</text>
  </g>
  <g font-family="Liberation Sans,sans-serif" fill="#222">
    <text x="483.8" y="340.8" font-size="7.4" textLength="29.5" lengthAdjust="spacingAndGlyphs">L x 1024</text>
    <text x="769.2" y="361.6" font-size="9.5" text-anchor="middle" textLength="69" lengthAdjust="spacingAndGlyphs">Prediction result</text>
  </g>
  <path d="M523 322.5C540 328 552 351 574.6 351C632 351 622 271.2 679 271.2" fill="none" stroke="#222" stroke-width="1"/>
  <path d="M685.5 271.2l-6.5-2.1v4.2z" fill="#111"/>
  <path d="M769.5 305v16" stroke="#222" stroke-width="1" fill="none"/>
  <path d="M769.5 326.5l-2.1-6h4.2z" fill="#111"/>
  <rect x="694.8" y="330.4" width="10.6" height="10.4" fill="#ff0000"/>
  <rect x="722.7" y="330.4" width="10.6" height="10.4" fill="#c00000"/>
  <rect x="750.3" y="330.4" width="10.6" height="10.4" fill="#18b8ee"/>
  <rect x="778.1" y="330.4" width="10.6" height="10.4" fill="#0000ff"/>
  <rect x="805.7" y="330.4" width="10.6" height="10.4" fill="#10dcf4"/>
  <rect x="833.2" y="330.4" width="11" height="10.4" fill="#efefef"/>
  <path d="M425 366.7H872" stroke="#444" stroke-width="1.4" stroke-dasharray="6.3 2.870" fill="none"/>
  <path d="M768.8 367C757 378 720 392.6 681 392.6C665 392.6 652 386 643 385.6C640 385.5 638.8 387 638.8 391.5" fill="none" stroke="#222" stroke-width="1"/>
  <path d="M638.8 397.3l-2.1-6h4.2z" fill="#111"/>
  <g fill="#d9d9d9">
    <rect x="471.3" y="399.7" width="31.6" height="32.4"/>
    <rect x="535" y="399.7" width="31.6" height="32.4"/>
    <rect x="598.8" y="399.7" width="31.6" height="32.4"/>
    <rect x="662.3" y="399.7" width="31.6" height="32.4"/>
    <rect x="725.8" y="399.7" width="31.6" height="32.4"/>
    <rect x="789.5" y="399.7" width="31.6" height="32.4"/>
  </g>
  <g font-family="Liberation Sans,sans-serif" font-size="10" fill="#222" stroke="#222" stroke-width="0.150" text-anchor="middle">
    <text x="487" y="418.2" textLength="15.8" lengthAdjust="spacingAndGlyphs">FFN</text>
    <text x="550.8" y="418.2" textLength="15.8" lengthAdjust="spacingAndGlyphs">FFN</text>
    <text x="614.6" y="418.2" textLength="15.8" lengthAdjust="spacingAndGlyphs">FFN</text>
    <text x="678.1" y="418.2" textLength="15.8" lengthAdjust="spacingAndGlyphs">FFN</text>
    <text x="741.6" y="418.2" textLength="15.8" lengthAdjust="spacingAndGlyphs">FFN</text>
    <text x="805.3" y="418.2" textLength="15.8" lengthAdjust="spacingAndGlyphs">FFN</text>
  </g>
</svg>
<!--CANVAS-->
<!-- vertical scrollbar -->
<div class="a" style="left:1131px;top:108px;width:10px;height:427.5px;background:#d9d9d9"></div>
<div class="a" style="left:1131px;top:245.5px;width:10px;height:120.5px;background:#fff;border-left:1px solid #bdbdbd"></div>
<div class="a" style="left:1131.5px;top:108px;width:9.5px;height:11.5px;background:#fff"></div>
<svg style="left:1134px;top:112px" width="5" height="3"><path d="M0 3h5L2.5 0z" fill="#555"/></svg>
<div class="a" style="left:1131.5px;top:524px;width:9.5px;height:11.5px;background:#fff"></div>
<svg style="left:1134px;top:528px" width="5" height="3"><path d="M0 0h5L2.5 3z" fill="#555"/></svg>
<!-- horizontal scrollbar -->
<div class="a" style="left:174px;top:536.5px;width:967px;height:41.5px;background:#e8e8e8"></div>
<div class="a" style="left:194px;top:537px;width:925px;height:11.5px;background:#d9d9d9"></div>
<div class="a" style="left:475px;top:537px;width:356px;height:11.5px;background:#fff;border:1px solid #c4c4c4"></div>
<div class="a" style="left:182.5px;top:537.5px;width:11.5px;height:11px;background:#fff"></div>
<svg style="left:186.5px;top:540.5px" width="3" height="5"><path d="M3 0v5L0 2.5z" fill="#555"/></svg>
<div class="a" style="left:1118.5px;top:537.5px;width:10px;height:11px;background:#fff"></div>
<svg style="left:1122.5px;top:540.5px" width="3" height="5"><path d="M0 0v5l3-2.5z" fill="#555"/></svg>
<!-- page tabs -->
<div class="t" style="left:196px;top:557.5px;font-weight:bold;color:#3955a3;font-size:9.5px">页-1</div>
<div class="t" style="left:240.5px;top:557.5px;color:#444;font-size:9px">全部</div>
<svg style="left:261px;top:561px" width="6" height="4"><path d="M0 4h6L3 0z" fill="#3955a3"/></svg>
<svg style="left:288px;top:558px" width="11" height="11" viewBox="0 0 11 11"><circle cx="5.5" cy="5.5" r="4.6" fill="none" stroke="#3955a3" stroke-width="0.9"/><path d="M5.5 3v5M3 5.5h5" stroke="#3955a3" stroke-width="1.2"/></svg>
<div class="a" style="left:0;top:577px;width:1141px;height:1px;background:#dcdcdc"></div>
<!--BOTTOM-->
</body>
</html>
